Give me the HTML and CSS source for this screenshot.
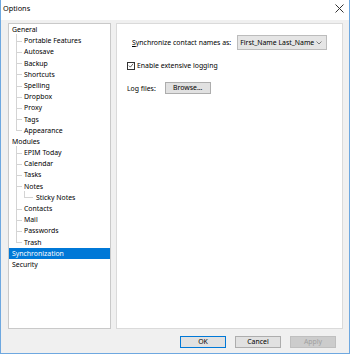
FILE: index.html
```html
<!DOCTYPE html>
<html lang="en">
<head>
    <meta charset="UTF-8">
    <title>Options</title>
    <link rel="stylesheet" href="styles.css">
</head>
<body>
    <div class="window">
        <div class="titlebar">
            <span class="title">Options</span>
            <span class="close">
                <svg width="9" height="9" viewBox="0 0 9 9"><path d="M0.5 0.5 L8.5 8.5 M8.5 0.5 L0.5 8.5" stroke="#333" stroke-width="1"/></svg>
            </span>
        </div>
        <div class="main">
            <div class="content">
                <!-- дерево настроек -->
                <div class="tree">
                    <ul class="root">
                        <li><div class="row">General</div>
                            <ul class="sub">
                                <li><div class="row">Portable Features</div></li>
                                <li><div class="row">Autosave</div></li>
                                <li><div class="row">Backup</div></li>
                                <li><div class="row">Shortcuts</div></li>
                                <li><div class="row">Spelling</div></li>
                                <li><div class="row">Dropbox</div></li>
                                <li><div class="row">Proxy</div></li>
                                <li><div class="row">Tags</div></li>
                                <li><div class="row">Appearance</div></li>
                            </ul>
                        </li>
                        <li><div class="row">Modules</div>
                            <ul class="sub">
                                <li><div class="row">EPIM Today</div></li>
                                <li><div class="row">Calendar</div></li>
                                <li><div class="row">Tasks</div></li>
                                <li><div class="row">Notes</div>
                                    <ul class="sub">
                                        <li><div class="row">Sticky Notes</div></li>
                                    </ul>
                                </li>
                                <li><div class="row">Contacts</div></li>
                                <li><div class="row">Mail</div></li>
                                <li><div class="row">Passwords</div></li>
                                <li><div class="row">Trash</div></li>
                            </ul>
                        </li>
                        <li><div class="row selected">Synchronization</div></li>
                        <li><div class="row">Security</div></li>
                    </ul>
                </div>

                <div class="panel">
                    <div class="field names">
                        <span><u>S</u>ynchronize contact names as:</span>
                        <div class="select">
                            <span>First_Name Last_Name</span>
                            <svg width="6" height="4" viewBox="0 0 6 4"><path d="M0.5 0.5 L3 3 L5.5 0.5" fill="none" stroke="#666" stroke-width="0.8"/></svg>
                        </div>
                    </div>
                    <label class="field check">
                        <span class="box">
                            <svg width="7" height="7" viewBox="0 0 7 7"><path d="M1 3.6 L2.8 5.4 L6 1.4" fill="none" stroke="#333" stroke-width="0.9"/></svg>
                        </span>
                        Enable extensive logging
                    </label>
                    <div class="field logs">
                        <span>Log files:</span>
                        <button class="btn browse">Browse...</button>
                    </div>
                </div>
            </div>
            <div class="footer">
                <button class="btn default">OK</button>
                <button class="btn">Cancel</button>
                <button class="btn" disabled>Apply</button>
            </div>
        </div>
    </div>
</body>
</html>
```

FILE: styles.css
```css
* {
    box-sizing: border-box;
}
body {
    margin: 0;
    font-family: "Noto Sans", "DejaVu Sans", sans-serif;
    font-size: 6.9px;
    color: #000;
    background: #fff;
}
.window {
    width: 350px;
    height: 354px;
    border: 1px solid #6ea8e0;
    border-top: none;
    display: flex;
    flex-direction: column;
    background: #f0f0f0;
}
.titlebar {
    height: 20px;
    background: #fff;
    display: flex;
    align-items: center;
    justify-content: space-between;
    padding: 0 5px 4px 2px;
}
.title {
    font-size: 7.3px;
}
.close svg {
    display: block;
}
.main {
    flex: 1;
    display: flex;
    flex-direction: column;
    padding: 3px 6px 0 7px;
}
.content {
    height: 306px;
    display: flex;
    gap: 5px;
}
.tree {
    width: 103px;
    background: #fff;
    border: 1px solid #c9c9c9;
    padding: 0;
}
.tree ul {
    list-style: none;
    margin: 0;
    padding: 0;
}
.row {
    height: 11.2px;
    line-height: 11.2px;
    padding-left: 3px;
    white-space: nowrap;
}
.sub {
    margin-left: 12px !important;
}
.sub > li {
    position: relative;
}
.sub > li::before {
    content: "";
    position: absolute;
    left: -5px;
    top: -1px;
    width: 5px;
    height: 6.6px;
    border-left: 1px solid #d4d4d4;
    border-bottom: 1px solid #d4d4d4;
}
.sub > li::after {
    content: "";
    position: absolute;
    left: -5px;
    top: 5.6px;
    bottom: -1px;
    border-left: 1px solid #d4d4d4;
}
.sub > li:last-child::after {
    display: none;
}
.sub .sub > li::before {
    left: -9px;
    width: 8px;
}
.selected {
    background: #0078d7;
    color: #fff;
}
.panel {
    flex: 1;
    background: #fff;
    border: 1px solid #dadada;
    padding: 11px 0 0 10px;
}
.field {
    display: flex;
    align-items: center;
    white-space: nowrap;
}
.names {
    padding-left: 5px;
    gap: 6px;
}
.select {
    width: 90px;
    height: 15px;
    background: #e5e5e5;
    border: 1px solid #bcbcbc;
    display: flex;
    align-items: center;
    justify-content: space-between;
    padding: 0 4px 0 2px;
}
.check {
    margin-top: 11px;
    gap: 2px;
}
.box {
    width: 8px;
    height: 8px;
    border: 1px solid #333;
    display: flex;
    align-items: center;
    justify-content: center;
    background: #fff;
}
.box svg {
    display: block;
}
.logs {
    margin-top: 12px;
    gap: 9px;
}
.btn {
    font-family: inherit;
    font-size: 6.9px;
    height: 12px;
    padding: 0;
    background: #e1e1e1;
    border: 1px solid #adadad;
    color: #000;
    line-height: 10px;
}
.browse {
    width: 46px;
}
.footer {
    display: flex;
    justify-content: flex-end;
    gap: 9px;
    padding: 7px 7px 0 0;
}
.footer .btn {
    width: 46px;
}
.default {
    border-color: #0078d7;
}
.btn:disabled {
    background: #cccccc;
    border-color: #bfbfbf;
    color: #a0a0a0;
}
```
